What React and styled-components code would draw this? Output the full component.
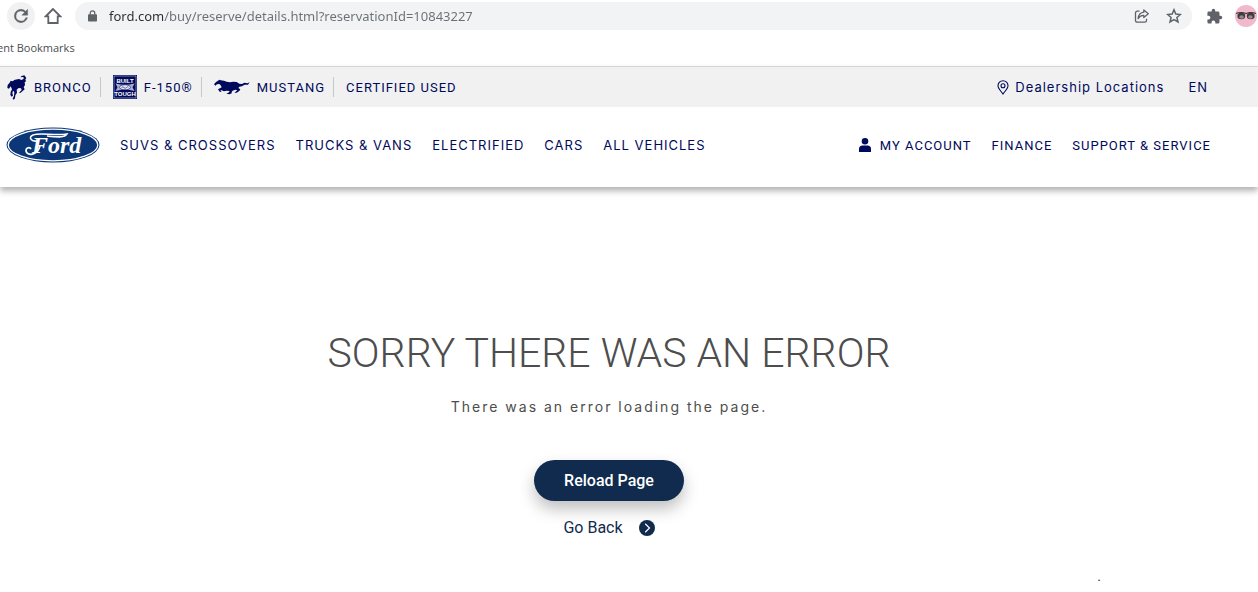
import React from 'react'
import styled, { createGlobalStyle } from 'styled-components'

const brands = [
  { id: 1, name: 'BRONCO', icon: <BroncoIcon /> },
  { id: 2, name: 'F-150®', icon: <ToughIcon /> },
  { id: 3, name: 'MUSTANG', icon: <MustangIcon /> },
  { id: 4, name: 'CERTIFIED USED' },
]

const vehicles = ['SUVS & CROSSOVERS', 'TRUCKS & VANS', 'ELECTRIFIED', 'CARS', 'ALL VEHICLES']

const App = () => {
  return (
    <>
      <GlobalStyle />
      <BrowserBar>
        <RoundButton $filled aria-label="Reload">
          <svg width="20" height="20" viewBox="0 0 24 24" fill="#5f6368">
            <path d="M17.65 6.35A7.96 7.96 0 0 0 12 4a8 8 0 1 0 7.73 10h-2.08A6 6 0 1 1 12 6c1.66 0 3.14.69 4.22 1.78L13 11h7V4z" stroke="#5f6368" strokeWidth=".5" />
          </svg>
        </RoundButton>
        <RoundButton aria-label="Home">
          <svg width="18" height="18" viewBox="0 0 18 18" fill="none" stroke="#5f6368" strokeWidth="1.8">
            <path d="M9 2 L1.8 9.3 H4.3 V16 H13.7 V9.3 H16.2 Z" />
          </svg>
        </RoundButton>
        <AddressBar>
          <svg width="9" height="12" viewBox="0 0 10 13" fill="#5f6368">
            <rect x="0" y="4.5" width="10" height="8" rx="1" />
            <path d="M2.5 5V3.2a2.5 2.5 0 0 1 5 0V5" fill="none" stroke="#5f6368" strokeWidth="1.4" />
          </svg>
          <AddressInput
            aria-label="Address"
            defaultValue="ford.com/buy/reserve/details.html?reservationId=10843227"
          />
          <IconButton aria-label="Share">
            <svg width="16" height="16" viewBox="0 0 16 16" fill="none" stroke="#5f6368" strokeWidth="1.3" strokeLinejoin="round">
              <path d="M5.5 3.2H3.2A1.7 1.7 0 0 0 1.5 4.9V12.5A1.7 1.7 0 0 0 3.2 14.2H10.8A1.7 1.7 0 0 0 12.5 12.5V10.8" />
              <path d="M9.8 2 L14.3 5.8 L9.8 9.5 V7.4 C7.1 7.3 5.4 8.4 4.1 10.6 C4.500 7.200 6.300 4.600 9.800 4.200 Z" />
            </svg>
          </IconButton>
          <IconButton aria-label="Bookmark this page">
            <svg width="16" height="16" viewBox="0 0 16 16" fill="none" stroke="#5f6368" strokeWidth="1.5">
              <path d="M8 1.8 L9.8 6.1 L14.4 6.5 L10.9 9.5 L12 14 L8 11.6 L4 14 L5.1 9.5 L1.6 6.5 L6.2 6.1 Z" />
            </svg>
          </IconButton>
        </AddressBar>
        <IconButton aria-label="Extensions">
          <svg width="17" height="17" viewBox="0 0 24 24" fill="#5f6368">
            <path d="M20.5 11H19V7a2 2 0 0 0-2-2h-4V3.5a2.5 2.5 0 0 0-5 0V5H4a2 2 0 0 0-2 2v3.8h1.5a2.7 2.7 0 0 1 0 5.4H2V20a2 2 0 0 0 2 2h3.8v-1.5a2.7 2.7 0 0 1 5.4 0V22H17a2 2 0 0 0 2-2v-4h1.5a2.5 2.5 0 0 0 0-5z" />
          </svg>
        </IconButton>
        <IconButton aria-label="Profile">
          <svg width="22" height="22" viewBox="0 0 22 22">
            <circle cx="11" cy="11" r="11" fill="#f2b8cb" />
            <path d="M1 8.5 Q6 6.5 11 8.500 Q16 6.500 21 8.500" fill="none" stroke="#333" strokeWidth="1.2" />
            <ellipse cx="6.3" cy="11" rx="3.900" ry="3.300" fill="#3c3c40" />
            <ellipse cx="15.7" cy="11" rx="3.900" ry="3.300" fill="#3c3c40" />
            <ellipse cx="6.6" cy="12" rx="2.300" ry="1.700" fill="#97878f" />
            <ellipse cx="15.4" cy="12" rx="2.300" ry="1.700" fill="#97878f" />
          </svg>
        </IconButton>
      </BrowserBar>
      <BookmarksBar>ent Bookmarks</BookmarksBar>

      <Header>
        <UtilityBar>
          <BrandList>
            {brands.map((brand) => (
              <BrandLink key={brand.id} href="#">
                {brand.icon}
                {brand.name}
              </BrandLink>
            ))}
          </BrandList>
          <UtilityLinks>
            <UtilityLink href="#">
              <svg width="12" height="15" viewBox="0 0 12 15" fill="none" stroke="#00095b" strokeWidth="1.1">
                <path d="M6 14 C4.5 11.5 1 8.8 1 5.7 A5 5 0 0 1 11 5.7 C11 8.8 7.5 11.5 6 14 Z" />
                <circle cx="6" cy="5.7" r="2" />
              </svg>
              Dealership Locations
            </UtilityLink>
            <UtilityLink href="#">EN</UtilityLink>
          </UtilityLinks>
        </UtilityBar>
        <MainNav>
          <LogoLink href="#" aria-label="Home page">
            <FordLogo />
          </LogoLink>
          <NavGroup>
            {vehicles.map((name) => (
              <NavLink key={name} href="#">{name}</NavLink>
            ))}
          </NavGroup>
          <AccountGroup>
            <AccountLink href="#">
              <svg width="12" height="14" viewBox="0 0 12 14" fill="#00095b">
                <circle cx="6" cy="3.3" r="3.3" />
                <path d="M0 14 V11 Q0 7.5 3.5 7.5 H8.5 Q12 7.5 12 11 V14 Z" />
              </svg>
              MY ACCOUNT
            </AccountLink>
            <AccountLink href="#">FINANCE</AccountLink>
            <AccountLink href="#">SUPPORT &amp; SERVICE</AccountLink>
          </AccountGroup>
        </MainNav>
      </Header>

      <Main>
        <Title>SORRY THERE WAS AN ERROR</Title>
        <Message>There was an error loading the page.</Message>
        <ReloadButton>Reload Page</ReloadButton>
        <BackLink href="#">
          Go Back
          <svg width="16" height="16" viewBox="0 0 16 16">
            <circle cx="8" cy="8" r="8" fill="#102b4e" />
            <path d="M6.2 3.8 L10.5 8 L6.2 12.2" fill="none" stroke="#fff" strokeWidth="1.2" />
          </svg>
        </BackLink>
      </Main>
      <Footer>.</Footer>
    </>
  )
}

export default App

function BroncoIcon() {
  return (
    <svg width="20" height="25" viewBox="20 12 60 75" fill="#00095b">
      <path d="M21 51 L22 42 L28 35 L31 29 L36 31 L44 26 L56 24 L64 27 L69 24 L71 20 L67 18 L60 19 L64 15 L72 13 L78 21 L75 25 L77 31 L73 34 L74 42 L70 49 L73 55 L67 60 L60 66 L56 65 L64 57 L62 52 L55 51 L49 56 L50 65 L45 73 L44 82 L40 86 L37 83 L41 74 L42 63 L38 59 L36 66 L38 74 L34 77 L30 72 L31 63 L35 55 L31 46 L26 53 Z" />
    </svg>
  )
}

function ToughIcon() {
  return (
    <svg width="24" height="24" viewBox="0 0 24 24">
      <rect width="24" height="24" fill="#00095b" />
      <rect x="1" y="1" width="22" height="22" fill="none" stroke="#c4c7de" strokeWidth=".6" />
      <path d="M2.5 8.5 Q12 11 21.5 8.5 L19.5 12.2 L21.5 16 Q12 13.5 2.5 16 L4.5 12.2 Z" fill="#a9aed0" />
      <ellipse cx="12" cy="12.3" rx="5.5" ry="2.5" fill="#e9eaf3" stroke="#00095b" strokeWidth=".6" />
      <path d="M8.5 12.6 q1.5 -1.5 2.5 0 t2.5 0 t2 -.5" fill="none" stroke="#00095b" strokeWidth=".6" />
      <ToughText x="12" y="8">BUILT</ToughText>
      <ToughText x="12" y="21">TOUGH</ToughText>
    </svg>
  )
}

function MustangIcon() {
  return (
    <svg width="36" height="16" viewBox="26 26 108 48" fill="#00095b">
      <path d="M26 42 L32 35 L38 31 L42 28 L46 30 L56 31 L64 34 L74 36 L84 34 L94 35 L102 40 L110 41 L117 37 L126 39 L133 36 L128 43 L118 43 L110 48 L102 49 L99 53 L105 57 L102 62 L94 67 L87 67 L96 60 L90 58 L82 61 L79 65 L79 69 L73 72 L63 70 L71 66 L73 62 L64 61 L56 63 L49 60 L45 60 L49 65 L43 64 L38 57 L45 53 L49 51 L46 45 L42 41 L35 42 L30 46 Z" />
    </svg>
  )
}

function FordLogo() {
  return (
    <svg width="94" height="36" viewBox="0 0 94 36">
      <ellipse cx="47" cy="18" rx="46.5" ry="17.5" fill="#0b3678" />
      <ellipse cx="47" cy="18" rx="44.8" ry="15.8" fill="none" stroke="#fff" strokeWidth="1.3" />
      <path d="M31 14 C25 15 22 10 27 8 C34 5 48 9 61 7 C59 11 50 10 41 9" fill="none" stroke="#fff" strokeWidth="1.6" />
      <path d="M34 19 C31 29 21 29 20 24 C20 20 24 20 25 22" fill="none" stroke="#fff" strokeWidth="1.7" />
      <LogoText x="26" y="26">Ford</LogoText>
    </svg>
  )
}

const GlobalStyle = createGlobalStyle`
* {
    box-sizing: border-box;
}
body {
    margin: 0;
    background: #fff;
    font-family: Roboto, "Liberation Sans", sans-serif;
}
a {
    color: inherit;
    text-decoration: none;
}
button {
    border: 0;
    padding: 0;
    background: none;
    font: inherit;
    cursor: pointer;
}
svg {
    display: block;
    flex-shrink: 0;
}
`

const BrowserBar = styled.div`
    display: flex;
    align-items: center;
    gap: 4px;
    height: 32px;
    padding: 0 1px 0 7px;
`

const RoundButton = styled.button`
    display: flex;
    align-items: center;
    justify-content: center;
    width: 28px;
    height: 28px;
    border-radius: 50%;
    background: ${(props) => (props.$filled ? '#f1f1f2' : 'transparent')};
`

const IconButton = styled.button`
    display: flex;
`

const AddressBar = styled.div`
    display: flex;
    flex: 1;
    align-items: center;
    gap: 16px;
    height: 28px;
    margin: 0 10px 0 4px;
    padding: 0 10px 0 13px;
    border-radius: 14px;
    background: #f1f3f4;

    & + button {
        margin-right: 8px;
    }
`

const AddressInput = styled.input`
    flex: 1;
    min-width: 0;
    margin-left: -4px;
    padding: 0;
    border: 0;
    outline: 0;
    font-family: "Noto Sans", sans-serif;
    font-size: 13px;
    line-height: 20px;
    color: transparent;
    /* host part is darker than the rest of the url */
    background: linear-gradient(90deg, #2b2d30 55px, #6b6f73 55px);
    background-clip: text;
    -webkit-background-clip: text;
`

const BookmarksBar = styled.div`
    height: 34px;
    padding-top: 7px;
    text-indent: -3px;
    font-family: "Open Sans", sans-serif;
    font-size: 11px;
    line-height: 18px;
    color: #4a4d51;
`

const Header = styled.header`
    color: #00095b;
    box-shadow: 0 4px 6px rgba(0, 0, 0, 0.3);
`

const UtilityBar = styled.div`
    display: flex;
    align-items: center;
    justify-content: space-between;
    height: 41px;
    padding: 0 50px 0 7px;
    border-top: 1px solid #d4d5d6;
    background: #f1f1f1;
`

const BrandList = styled.nav`
    display: flex;
    align-items: center;
`

const BrandLink = styled.a`
    display: flex;
    align-items: center;
    gap: 7px;
    height: 20px;
    padding-right: 8px;
    font-size: 13px;
    letter-spacing: 1px;

    & + & {
        padding-left: 12px;
        border-left: 1px solid #c6c7c9;
    }
`

const UtilityLinks = styled.div`
    display: flex;
    gap: 24px;
`

const UtilityLink = styled.a`
    display: flex;
    align-items: center;
    gap: 6px;
    font-family: Inter, sans-serif;
    font-size: 13px;
    letter-spacing: 1px;
`

const MainNav = styled.nav`
    display: flex;
    align-items: center;
    height: 80px;
    padding: 0 47px 4px 6px;
    background: #fff;
`

const LogoLink = styled.a`
    margin-right: 20px;
`

const NavGroup = styled.div`
    display: flex;
    flex: 1;
    gap: 20px;
`

const NavLink = styled.a`
    font-family: Inter, sans-serif;
    font-size: 13px;
    letter-spacing: 1px;
    white-space: nowrap;
`

const AccountGroup = styled(NavGroup)`
    flex: none;
`

const AccountLink = styled(NavLink)`
    display: flex;
    align-items: center;
    gap: 9px;
    font-family: Roboto, sans-serif;
`

const Main = styled.main`
    display: flex;
    flex-direction: column;
    align-items: center;
    padding: 140px 40px 0 0;
`

const Title = styled.h1`
    margin: 0;
    font-size: 41px;
    font-weight: 300;
    line-height: 52px;
    color: #4d4d4d;
`

const Message = styled.p`
    margin: 18px 0 43px;
    font-family: Inter, sans-serif;
    font-size: 14px;
    line-height: 20px;
    letter-spacing: 2px;
    color: #4d4d4d;
`

const ReloadButton = styled.button`
    height: 41px;
    padding: 0 30px;
    border-radius: 21px;
    background: #102b4e;
    box-shadow: 0 8px 16px rgba(0, 0, 0, 0.25);
    color: #fff;
    font-size: 16px;
    font-weight: 500;
`

const BackLink = styled.a`
    display: flex;
    align-items: center;
    gap: 16px;
    margin-top: 16px;
    font-size: 16px;
    line-height: 22px;
    color: #102b4e;
`

const Footer = styled.footer`
    margin-top: 27px;
    padding-right: 157px;
    text-align: right;
    font-size: 14px;
    line-height: 20px;
    color: #333;
`

const LogoText = styled.text`
    font-family: "Liberation Serif", serif;
    font-size: 24px;
    font-style: italic;
    font-weight: 700;
    fill: #fff;
`

const ToughText = styled.text`
    font-family: "Liberation Sans", sans-serif;
    font-size: 6px;
    font-weight: 700;
    letter-spacing: 0;
    text-anchor: middle;
    fill: #fff;
`
